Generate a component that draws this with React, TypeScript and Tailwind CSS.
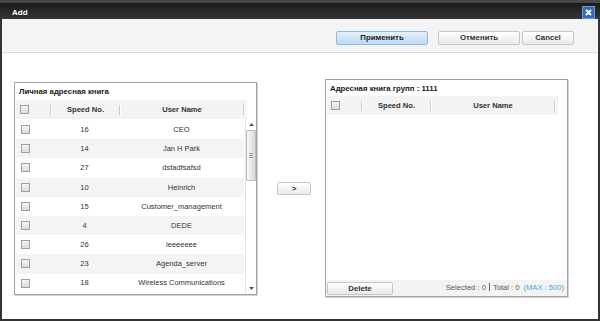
import React from 'react';

const rows = [
  { no: 16, name: 'CEO' },
  { no: 14, name: 'Jan H Park' },
  { no: 27, name: 'dsfadfsafsd' },
  { no: 10, name: 'Heinrich' },
  { no: 15, name: 'Customer_management' },
  { no: 4, name: 'DEDE' },
  { no: 26, name: 'leeeeeee' },
  { no: 23, name: 'Agenda_server' },
  { no: 18, name: 'Wireless Communications' },
];

const Check: React.FC = () => (
  <span className="inline-block w-[9px] h-[9px] border border-[#a0a0a0] bg-gradient-to-b from-[#f4f4f4] to-[#dcdcdc]" />
);

const Sep: React.FC = () => (
  <span className="w-[2px] h-[10px] border-l border-[#c9c9c9] border-r border-r-white" />
);

const Btn: React.FC<{ w: string; children: React.ReactNode; primary?: boolean }> = ({ w, children, primary }) => (
  <button
    className={
      primary
        ? `${w} h-[14px] rounded-[2px] border border-[#8db6e3] bg-gradient-to-b from-[#e3f0fd] to-[#bed9f5] font-bold text-[7.8px] text-[#222] leading-none`
        : `${w} h-[14px] rounded-[2px] border border-[#c6c6c6] bg-gradient-to-b from-white to-[#e9e9e9] font-bold text-[7.8px] text-[#333] leading-none`
    }
  >
    {children}
  </button>
);

const Header: React.FC = () => (
  <div className="ml-[1px] w-[231px] h-[19px] bg-[#f3f3f3] flex items-center font-bold text-[7.6px] text-[#333]">
    <div className="w-[34px] pl-[4px] flex items-center">
      <Check />
    </div>
    <Sep />
    <div className="w-[67px] text-center">Speed No.</div>
    <Sep />
    <div className="w-[122px] text-center">User Name</div>
    <Sep />
  </div>
);

const Scrollbar: React.FC = () => (
  <div className="ml-auto w-[11px] h-full border-l border-[#e4e4e4] flex flex-col items-center">
    <div className="h-[11px] flex items-center justify-center">
      <svg width="5" height="3" viewBox="0 0 5 3">
        <path d="M0 3 L2.5 0 L5 3 Z" fill="#555" />
      </svg>
    </div>
    <div className="w-[10px] h-[51px] border border-[#bdbdbd] rounded-[1px] bg-gradient-to-r from-[#f7f7f7] to-[#dadada] flex flex-col items-center justify-center gap-[1px]">
      <span className="w-[4px] h-px bg-[#9a9a9a]" />
      <span className="w-[4px] h-px bg-[#9a9a9a]" />
      <span className="w-[4px] h-px bg-[#9a9a9a]" />
    </div>
    <div className="flex-1" />
    <div className="h-[11px] flex items-center justify-center">
      <svg width="5" height="3" viewBox="0 0 5 3">
        <path d="M0 0 L2.5 3 L5 0 Z" fill="#555" />
      </svg>
    </div>
  </div>
);

export default function App() {
  return (
    <div className="w-[600px] h-[321px] bg-[#333] flex flex-col font-['Liberation_Sans',Arial,sans-serif]">
      {/* title bar */}
      <div className="h-[19px] shrink-0 border-t-[3px] border-[#474747] bg-gradient-to-b from-[#1b1b1b] to-[#363636] flex items-center justify-between">
        <span className="pl-[12px] pt-[4px] text-white font-bold text-[8px]">Add</span>
        <span className="mr-[5px] mt-[2px] w-[13px] h-[13px] bg-[#2f6db4] border border-[#6b9ad0] flex items-center justify-center">
          <svg width="7" height="7" viewBox="0 0 7 7">
            <path d="M1 1 L6 6 M6 1 L1 6" stroke="white" strokeWidth="1.8" />
          </svg>
        </span>
      </div>

      <div className="mx-[2px] mb-[2px] flex-1 bg-white flex flex-col">
        {/* toolbar */}
        <div className="h-[34px] shrink-0 bg-[#f4f4f4] border-b border-[#dcdcdc] flex justify-end items-start pt-[12px] pr-[24px]">
          <Btn w="w-[92px]" primary>Применить</Btn>
          <div className="ml-[10px] flex gap-[2px]">
            <Btn w="w-[82px]">Отменить</Btn>
            <Btn w="w-[52px]">Cancel</Btn>
          </div>
        </div>

        {/* content */}
        <div className="flex items-start">
          {/* left panel */}
          <div className="mt-[29px] ml-[12px] w-[243px] h-[213px] border border-[#a3a3a3] shadow-[1px_1px_0_#d2d2d2] bg-white flex flex-col">
            <div className="h-[17px] flex items-center pl-[4px] pt-[1px] font-bold text-[7.8px] text-[#1a1a1a]">
              Личная адресная книга
            </div>
            <Header />
            <div className="flex flex-1 min-h-0">
              <div className="ml-[1px] w-[228px] pt-[1px]">
                {rows.map((r, i) => (
                  <div
                    key={r.no}
                    className={`h-[19.2px] flex items-center text-[7.5px] text-[#333] ${i % 2 ? 'bg-[#f4f4f4]' : 'bg-white'}`}
                  >
                    <div className="w-[34px] pl-[5px] flex items-center">
                      <Check />
                    </div>
                    <div className="w-[69px] text-center">{r.no}</div>
                    <div className="flex-1 text-center">{r.name}</div>
                  </div>
                ))}
              </div>
              <Scrollbar />
            </div>
          </div>

          {/* move button */}
          <button className="ml-[20px] mt-[129px] w-[34px] h-[13px] rounded-[2px] border border-[#c6c6c6] bg-gradient-to-b from-white to-[#ebebeb] font-bold text-[8px] text-[#333] leading-none">
            &gt;
          </button>

          {/* right panel */}
          <div className="mt-[26px] ml-[14px] w-[243px] h-[218px] border border-[#a3a3a3] shadow-[1px_1px_0_#d2d2d2] bg-white flex flex-col">
            <div className="h-[16px] flex items-center pl-[4px] pt-[1px] font-bold text-[7.8px] text-[#1a1a1a]">
              Адресная книга групп : 1111
            </div>
            <Header />
            <div className="flex-1" />
            <div className="h-[16px] bg-[#f3f3f3] flex items-end pb-[1px]">
              <button className="ml-[1px] w-[66px] h-[13px] rounded-[2px] border border-[#c6c6c6] bg-gradient-to-b from-white to-[#e9e9e9] font-bold text-[7.8px] text-[#333] leading-none">
                Delete
              </button>
              <div className="ml-auto pr-[3px] self-center text-[7.6px] text-[#555] flex items-center">
                <span>Selected : 0</span>
                <span className="mx-[3px] w-px h-[8px] bg-[#666]" />
                <span>Total : 0</span>
                <span className="ml-[4px] text-[#44a6e4]">(MAX : 500)</span>
              </div>
            </div>
          </div>
        </div>
      </div>
    </div>
  );
}
